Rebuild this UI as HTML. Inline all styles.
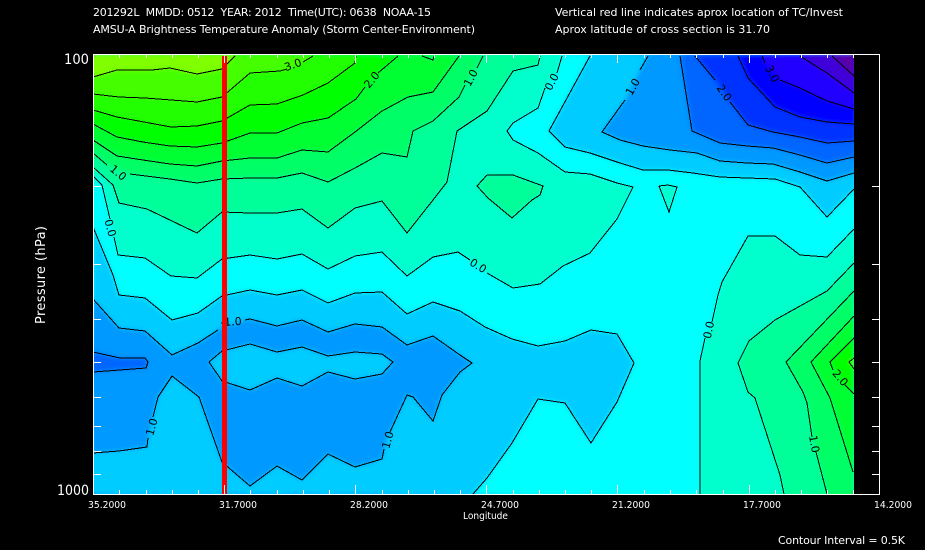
<!DOCTYPE html>
<html><head><meta charset="utf-8"><title>AMSU-A Brightness Temperature Anomaly</title>
<style>
html,body{margin:0;padding:0;background:#000;width:925px;height:550px;overflow:hidden}
svg{display:block}
text{font-family:"DejaVu Sans","Liberation Sans",sans-serif;fill:#fff;font-size:11px}
.c polygon{stroke:none}
.l polyline{fill:none;stroke:#000;stroke-width:1}
.lb text{fill:#000;font-size:11px;text-anchor:middle;dominant-baseline:central}
</style></head><body>
<svg width="925" height="550" viewBox="0 0 925 550" xmlns="http://www.w3.org/2000/svg">
<defs>
<clipPath id="plot"><rect x="93" y="55" width="761" height="439"/></clipPath>
<filter id="soft" filterUnits="userSpaceOnUse" x="60" y="20" width="830" height="510"><feGaussianBlur stdDeviation="2.5"/></filter>
<g id="fills" class="c">
<rect x="93" y="55" width="761" height="439" fill="#00ffff"/>
<polygon fill="#00ffcc" points="93,55 562,55 557,73 545,88 538,108 513,123 507,131 513,140 538,153 565,172 590,174 617,183 633,187 617,219 590,253 563,266 540,284 513,288 487,273 470,260 458,252 433,257 407,276 382,252 355,256 328,269 302,254 277,259 250,255 222,259 197,278 171,276 145,258 118,255 102,185 93,176"/>
<polygon fill="#00ff99" points="93,55 540,55 538,65 513,71 487,111 457,131 447,182 433,200 407,233 382,201 355,208 328,228 302,209 277,213 250,213 222,212 197,233 147,209 119,203 113,185 93,167"/>
<polygon fill="#00ff66" points="93,55 483,55 477,68 465,85 459,97 433,121 413,131 407,157 382,153 355,168 328,182 302,173 277,178 250,178 222,179 197,183 170,179 130,174 107,165 93,153"/>
<polygon fill="#00ff33" points="93,55 459,55 433,92 408,97 382,111 355,132 328,152 302,150 277,158 250,158 222,161 197,166 170,164 143,160 117,156 93,140"/>
<polygon fill="#00ff00" points="93,55 398,55 378,73 365,87 356,99 328,118 302,123 277,133 250,133 222,143 197,147 170,146 143,142 117,137 93,124"/>
<polygon fill="#22ff00" points="93,55 356,55 355,63 328,83 303,95 277,104 250,105 222,121 197,126 171,127 117,117 93,110"/>
<polygon fill="#44ff00" points="93,55 313,55 303,62 287,69 280,71 250,73 222,97 197,102 171,100 145,98 119,97 93,94"/>
<polygon fill="#80ff00" points="93,55 235,55 222,69 197,74 170,68 152,70 117,70 93,77"/>
<polygon fill="#00ff66" points="422,55 433,60 434,55"/>
<polygon fill="#00ff99" points="487,175 513,175 543,186 540,195 532,200 512,218 488,198 477,186"/>
<polygon fill="#00ffcc" points="659,186 668,185 677,187 669,212"/>
<polygon fill="#00ccff" points="93,227 113,275 119,295 145,298 172,320 198,313 222,296 250,290 277,295 302,290 328,303 355,293 382,292 407,314 433,302 460,311 485,327 512,339 538,346 565,341 591,330 617,334 634,363 617,402 591,443 565,403 538,399 512,443 487,478 473,494 93,494"/>
<polygon fill="#0099ff" points="93,299 119,328 145,331 172,355 198,343 222,327 250,319 277,326 302,320 328,332 355,324 382,327 407,345 433,336 460,355 472,363 460,372 442,395 433,421 413,397 407,395 388,435 383,455 382,459 355,467 328,454 302,480 277,466 250,486 222,462 199,397 172,376 158,397 153,418 147,447 119,451 93,453"/>
<polygon fill="#0066ff" points="93,352 120,358 145,358 148,362 146,368 120,370 93,372"/>
<polygon fill="#00ccff" points="209,362 222,351 250,344 277,352 302,347 328,356 355,352 382,354 393,362 382,374 355,379 328,372 302,386 277,378 250,390 222,381"/>
<polygon fill="#00ccff" points="590,55 549,131 565,147 590,153 620,163 643,170 668,170 693,173 720,177 775,179 800,187 827,217 854,189 854,55"/>
<polygon fill="#0099ff" points="648,55 640,70 625,100 602,132 620,140 643,146 670,150 697,153 720,161 747,163 773,164 800,172 827,181 854,173 854,55"/>
<polygon fill="#0066ff" points="680,55 692,131 720,143 747,146 773,148 800,155 827,163 854,157 854,55"/>
<polygon fill="#0033ff" points="695,55 715,80 730,102 748,125 773,132 800,137 827,143 854,141 854,55"/>
<polygon fill="#0000ff" points="738,55 748,78 775,107 800,117 827,122 854,124 854,55"/>
<polygon fill="#2000ff" points="762,55 765,63 780,80 800,88 827,101 854,109 854,55"/>
<polygon fill="#4000d8" points="800,55 827,73 854,93 854,55"/>
<polygon fill="#5a00a8" points="832,55 854,76 854,55"/>
<polygon fill="#00ffcc" points="700,494 700,361 705,338 712,322 718,295 722,282 748,236 775,236 800,255 827,257 854,229 854,494"/>
<polygon fill="#00ff99" points="854,263 827,291 775,320 749,341 738,363 748,392 755,398 780,475 784,494 854,494"/>
<polygon fill="#00ff66" points="854,291 786,362 803,392 807,403 815,447 827,494 854,494"/>
<polygon fill="#00ff33" points="854,316 811,362 830,398 853,472 854,473"/>
<polygon fill="#00ff00" points="854,338 830,362 845,385 854,394"/>
<polygon fill="#44ff00" points="854,358 849,362 854,369"/>
</g>
</defs>
<rect width="925" height="550" fill="#000"/>
<g clip-path="url(#plot)">
<g filter="url(#soft)">
<use href="#fills"/>
<use href="#fills" transform="matrix(-0.03 0 0 1 95.79 0)"/>
<use href="#fills" transform="matrix(-0.03 0 0 1 879.62 0)"/>
<use href="#fills" transform="matrix(1 0 0 -0.03 0 56.65)"/>
<use href="#fills" transform="matrix(1 0 0 -0.03 0 508.82)"/>
</g>
</g>
<g class="l" shape-rendering="crispEdges">
<polyline points="93,77 117,70 152,70 170,68 197,74 222,69 235,56"/>
<polyline points="93,94 119,97 145,98 171,100 197,102 222,97 250,73 280,71 287,69"/>
<polyline points="303,62 313,56"/>
<polyline points="93,110 117,117 171,127 197,126 222,121 250,105 277,104 303,95 328,83 355,63 356,56"/>
<polyline points="93,124 117,137 143,142 170,146 197,147 222,143 250,133 277,133 302,123 328,118 356,99 365,87"/>
<polyline points="378,73 398,56"/>
<polyline points="93,140 117,156 143,160 170,164 197,166 222,161 250,158 277,158 302,150 328,152 355,132 382,111 408,97 433,92 459,56"/>
<polyline points="422,56 433,60 434,56"/>
<polyline points="93,153 107,165"/>
<polyline points="130,174 170,179 197,183 222,179 250,178 277,178 302,173 328,182 355,168 382,153 407,157 413,131 433,121 459,97 465,85"/>
<polyline points="477,68 483,56"/>
<polyline points="93,167 113,185 119,203 147,209 197,233 222,212 250,213 277,213 302,209 328,228 355,208 382,201 407,233 433,200 447,182 457,131 487,111 513,71 538,65 540,56"/>
<polyline points="93,176 102,185 110,219"/>
<polyline points="114,237 118,255 145,258 171,276 197,278 222,259 250,255 277,259 302,254 328,269 355,256 382,252 407,276 433,257 458,252 470,260"/>
<polyline points="487,273 513,288 540,284 563,266 590,253 617,219 633,187 617,183 590,174 565,172 538,153 513,140 507,131 513,123 538,108 545,88"/>
<polyline points="557,73 562,56"/>
<polyline points="487,175 513,175 543,186 540,195 532,200 512,218 488,198 477,186 487,175"/>
<polyline points="659,186 668,185 677,187 669,212 659,186"/>
<polyline points="93,227 113,275 119,295 145,298 172,320 198,313 222,296 250,290 277,295 302,290 328,303 355,293 382,292 407,314 433,302 460,311 485,327 512,339 538,346 565,341 591,330 617,334 634,363 617,402 591,443 565,403 538,399 512,443 487,478 473,494"/>
<polyline points="93,299 119,328 145,331 172,355 198,343 218,330"/>
<polyline points="245,320 250,319 277,326 302,320 328,332 355,324 382,327 407,345 433,336 460,355 472,363 460,372 442,395 433,421 413,397 407,395 390,432"/>
<polyline points="384,449 382,459 355,467 328,454 302,480 277,466 250,486 222,462 199,397 172,376 158,397 153,417"/>
<polyline points="148,438 147,447 119,451 93,453"/>
<polyline points="93,352 120,358 145,358 148,362 146,368 120,370 93,372"/>
<polyline points="209,362 222,351 250,344 277,352 302,347 328,356 355,352 382,354 393,362 382,374 355,379 328,372 302,386 277,378 250,390 222,381 209,362"/>
<polyline points="590,56 549,131 565,147 590,153 620,163 643,170 668,170 693,173 720,177 775,179 800,187 827,217 854,189"/>
<polyline points="648,56 640,70"/>
<polyline points="625,100 602,132 620,140 643,146 670,150 697,153 720,161 747,163 773,164 800,172 827,181 854,173"/>
<polyline points="680,56 692,131 720,143 747,146 773,148 800,155 827,163 854,157"/>
<polyline points="695,56 715,80"/>
<polyline points="730,102 748,125 773,132 800,137 827,143 854,141"/>
<polyline points="738,56 748,78 775,107 800,117 827,122 854,124"/>
<polyline points="762,56 765,63"/>
<polyline points="780,80 800,88 827,101 854,109"/>
<polyline points="800,56 827,73 854,93"/>
<polyline points="832,56 854,76"/>
<polyline points="700,494 700,361 705,338"/>
<polyline points="712,322 718,295 722,282 748,236 775,236 800,255 827,257 854,229"/>
<polyline points="854,263 827,291 775,320 749,341 738,363 748,392 755,398 780,475 784,494"/>
<polyline points="854,291 786,362 803,392 807,403 812,437"/>
<polyline points="816,452 827,494"/>
<polyline points="854,316 811,362 830,398 853,472"/>
<polyline points="854,338 830,362 833,370"/>
<polyline points="845,385 854,394"/>
<polyline points="854,358 849,362 854,369"/>
</g>
<g class="lb">
<text transform="translate(293,65) rotate(-20)">3.0</text>
<text transform="translate(372,80) rotate(-50)">2.0</text>
<text transform="translate(471,78) rotate(-62)">1.0</text>
<text transform="translate(552,82) rotate(-62)">0.0</text>
<text transform="translate(633,87) rotate(-60)">1.0</text>
<text transform="translate(724,93) rotate(55)">2.0</text>
<text transform="translate(772,74) rotate(62)">3.0</text>
<text transform="translate(118,173) rotate(40)">1.0</text>
<text transform="translate(110,228) rotate(75)">0.0</text>
<text transform="translate(478,266) rotate(32)">0.0</text>
<text transform="translate(231,322) rotate(-3)">-1.0</text>
<text transform="translate(152,427) rotate(-75)">1.0</text>
<text transform="translate(388,440) rotate(-75)">1.0</text>
<text transform="translate(709,330) rotate(-78)">0.0</text>
<text transform="translate(840,378) rotate(50)">2.0</text>
<text transform="translate(814,444) rotate(80)">1.0</text>
</g>
<rect x="222" y="56" width="5" height="438" fill="#ff0000" shape-rendering="crispEdges"/>
<path shape-rendering="crispEdges" fill="none" stroke="#fff" stroke-width="1" d="M93.5 54.5H879.5V494.5H93.5Z
M119.5 55v3M146.5 55v3M172.5 55v3M198.5 55v3M224.5 55v8M250.5 55v3M277.5 55v3M303.5 55v3M329.5 55v3M355.5 55v8M382.5 55v3M408.5 55v3M434.5 55v3M460.5 55v3M486.5 55v8M513.5 55v3M539.5 55v3M565.5 55v3M591.5 55v3M617.5 55v8M644.5 55v3M670.5 55v3M696.5 55v3M723.5 55v3M749.5 55v8M775.5 55v3M801.5 55v3M827.5 55v3M853.5 55v3
M119.5 494v-4M146.5 494v-4M172.5 494v-4M198.5 494v-4M224.5 494v-9M250.5 494v-4M277.5 494v-4M303.5 494v-4M329.5 494v-4M355.5 494v-9M382.5 494v-4M408.5 494v-4M434.5 494v-4M460.5 494v-4M486.5 494v-9M513.5 494v-4M539.5 494v-4M565.5 494v-4M591.5 494v-4M617.5 494v-9M644.5 494v-4M670.5 494v-4M696.5 494v-4M723.5 494v-4M749.5 494v-9M775.5 494v-4M801.5 494v-4M827.5 494v-4M853.5 494v-4
M94 186.5h7M94 264.5h7M94 319.5h7M94 362.5h7M94 397.5h7M94 426.5h7M94 451.5h7M94 474.5h7
M872 186.5h7M872 264.5h7M872 319.5h7M872 362.5h7M872 397.5h7M872 426.5h7M872 451.5h7M872 474.5h7"/>
<text x="93" y="16" textLength="338" lengthAdjust="spacing" xml:space="preserve" style="white-space:pre">201292L  MMDD: 0512  YEAR: 2012  Time(UTC): 0638  NOAA-15</text>
<text x="93" y="33" textLength="382" lengthAdjust="spacing">AMSU-A Brightness Temperature Anomaly (Storm Center-Environment)</text>
<text x="555" y="16" textLength="288" lengthAdjust="spacing">Vertical red line indicates aprox location of TC/Invest</text>
<text x="555" y="33" textLength="215" lengthAdjust="spacing">Aprox latitude of cross section is 31.70</text>
<text x="64" y="64" style="font-size:14px" textLength="25" lengthAdjust="spacingAndGlyphs">100</text>
<text x="57" y="495" style="font-size:14px" textLength="32" lengthAdjust="spacingAndGlyphs">1000</text>
<text transform="translate(45,275) rotate(-90)" text-anchor="middle" style="font-size:13px" textLength="98" lengthAdjust="spacing">Pressure (hPa)</text>
<text x="88" y="508" style="font-size:10px" textLength="38" lengthAdjust="spacingAndGlyphs">35.2000</text>
<text x="219" y="508" style="font-size:10px" textLength="38" lengthAdjust="spacingAndGlyphs">31.7000</text>
<text x="350" y="508" style="font-size:10px" textLength="38" lengthAdjust="spacingAndGlyphs">28.2000</text>
<text x="481" y="508" style="font-size:10px" textLength="38" lengthAdjust="spacingAndGlyphs">24.7000</text>
<text x="612" y="508" style="font-size:10px" textLength="38" lengthAdjust="spacingAndGlyphs">21.2000</text>
<text x="743" y="508" style="font-size:10px" textLength="38" lengthAdjust="spacingAndGlyphs">17.7000</text>
<text x="874" y="508" style="font-size:10px" textLength="38" lengthAdjust="spacingAndGlyphs">14.2000</text>
<text x="463" y="519" style="font-size:10px" textLength="45" lengthAdjust="spacingAndGlyphs">Longitude</text>
<text x="778" y="544" textLength="127" lengthAdjust="spacing">Contour Interval = 0.5K</text>
</svg>
</body></html>
